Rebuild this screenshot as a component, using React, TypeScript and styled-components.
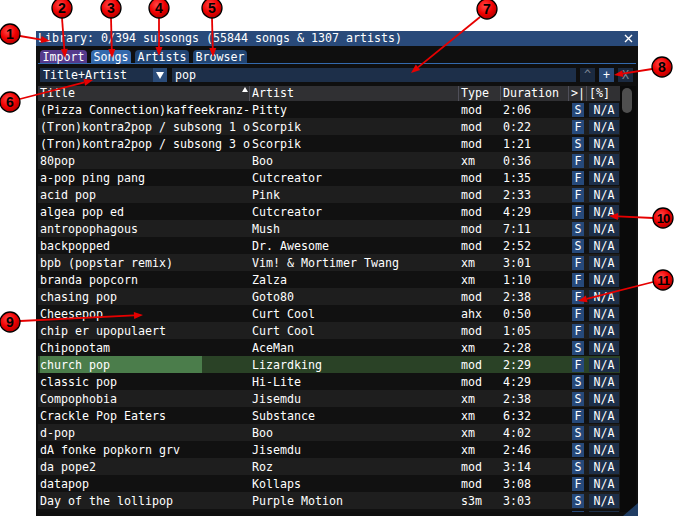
import React from "react";
import styled, { createGlobalStyle } from "styled-components";

const GlobalStyle = createGlobalStyle`
  html, body {
    margin: 0;
    padding: 0;
    background: #ffffff;
  }
  body {
    font-family: "DejaVu Sans Mono", "Liberation Mono", monospace;
  }
`;

type Song = {
  title: string;
  artist: string;
  type: string;
  time: string;
  src: "S" | "F";
};

// the title column only fits this many monospace cells
const TITLE_CHARS = 30;

const songs: Song[] = [
  { title: "(Pizza Connection)kaffeekranz-pop", artist: "Pitty", type: "mod", time: "2:06", src: "S" },
  { title: "(Tron)kontra2pop / subsong 1 of 3", artist: "Scorpik", type: "mod", time: "0:22", src: "F" },
  { title: "(Tron)kontra2pop / subsong 3 of 3", artist: "Scorpik", type: "mod", time: "1:21", src: "S" },
  { title: "80pop", artist: "Boo", type: "xm", time: "0:36", src: "F" },
  { title: "a-pop ping pang", artist: "Cutcreator", type: "mod", time: "1:35", src: "F" },
  { title: "acid pop", artist: "Pink", type: "mod", time: "2:33", src: "F" },
  { title: "algea pop ed", artist: "Cutcreator", type: "mod", time: "4:29", src: "F" },
  { title: "antropophagous", artist: "Mush", type: "mod", time: "7:11", src: "S" },
  { title: "backpopped", artist: "Dr. Awesome", type: "mod", time: "2:52", src: "S" },
  { title: "bpb (popstar remix)", artist: "Vim! & Mortimer Twang", type: "xm", time: "3:01", src: "F" },
  { title: "branda popcorn", artist: "Zalza", type: "xm", time: "1:10", src: "F" },
  { title: "chasing pop", artist: "Goto80", type: "mod", time: "2:38", src: "F" },
  { title: "Cheesepop", artist: "Curt Cool", type: "ahx", time: "0:50", src: "F" },
  { title: "chip er upopulaert", artist: "Curt Cool", type: "mod", time: "1:05", src: "F" },
  { title: "Chipopotam", artist: "AceMan", type: "xm", time: "2:28", src: "S" },
  { title: "church pop", artist: "Lizardking", type: "mod", time: "2:29", src: "F" },
  { title: "classic pop", artist: "Hi-Lite", type: "mod", time: "4:29", src: "S" },
  { title: "Compophobia", artist: "Jisemdu", type: "xm", time: "2:38", src: "S" },
  { title: "Crackle Pop Eaters", artist: "Substance", type: "xm", time: "6:32", src: "F" },
  { title: "d-pop", artist: "Boo", type: "xm", time: "4:02", src: "S" },
  { title: "dA fonke popkorn grv", artist: "Jisemdu", type: "xm", time: "2:46", src: "S" },
  { title: "da pope2", artist: "Roz", type: "mod", time: "3:14", src: "S" },
  { title: "datapop", artist: "Kollaps", type: "mod", time: "3:08", src: "F" },
  { title: "Day of the lollipop", artist: "Purple Motion", type: "s3m", time: "3:03", src: "S" },
  { title: "deep pop", artist: "Nuke", type: "xm", time: "2:11", src: "S" },
];

const PLAYING = 15;

const Page = styled.div`
  position: relative;
  width: 675px;
  height: 516px;
  overflow: hidden;
  padding: 31px 0 0 36px;
  box-sizing: border-box;
`;

const Window = styled.div`
  position: relative;
  width: 602px;
  height: 485px;
  background: #0f0f0f;
  color: #ffffff;
  font-size: 11.63px;
  display: flex;
  flex-direction: column;
  overflow: hidden;
`;

const TitleBar = styled.div`
  height: 15px;
  line-height: 15px;
  background: #294a7a;
  padding: 0 5px 0 2px;
  display: flex;
  align-items: center;
  justify-content: space-between;
  white-space: pre;
`;

const Body = styled.div`
  padding: 4px 2px 0;
  display: flex;
  flex-direction: column;
`;

const TabBar = styled.div`
  display: flex;
  gap: 4px;
  padding-left: 2px;
  height: 13px;
  border-bottom: 1px solid #3369ad;
`;

const tabColors = {
  import: "#553a8c",
  active: "#3369ad",
  idle: "#224573",
};

const Tab = styled.div<{ $tone: keyof typeof tabColors }>`
  height: 13px;
  line-height: 14px;
  padding: 0 2.5px;
  border-radius: 4px 4px 0 0;
  background: ${(p) => tabColors[p.$tone]};
`;

const FilterRow = styled.div`
  display: flex;
  gap: 4px;
  height: 14px;
  margin-top: 4px;
  padding: 0 3px 0 2px;
`;

const Combo = styled.div`
  width: 127px;
  margin-right: 1px;
  display: flex;
  background: #1d2f49;
`;

const ComboText = styled.div`
  flex: 1;
  padding-left: 3px;
  line-height: 14px;
`;

const ComboArrow = styled.div`
  width: 14px;
  background: #2b4c7a;
  display: flex;
  align-items: center;
  justify-content: center;
`;

const SearchInput = styled.div`
  flex: 1;
  background: #1d2f49;
  padding-left: 3px;
  line-height: 14px;
`;

const ToolButton = styled.div<{ $primary?: boolean }>`
  width: 15px;
  height: 14px;
  line-height: 14px;
  text-align: center;
  background: ${(p) => (p.$primary ? "#2b4c7a" : "#1b2a40")};
  color: ${(p) => (p.$primary ? "#ffffff" : "#7f8694")};
`;

const Table = styled.div`
  display: flex;
  margin-top: 4px;
  height: 426px;
`;

const TableMain = styled.div`
  width: 582px;
  display: flex;
  flex-direction: column;
`;

const columns = "212px 209px 42px 68px 18px 33px";

const HeaderRow = styled.div`
  display: grid;
  grid-template-columns: ${columns};
  height: 15px;
  line-height: 14px;
  background: #303033;
`;

const HeaderCell = styled.div<{ $last?: boolean }>`
  padding-left: 2px;
  display: flex;
  justify-content: space-between;
  align-items: flex-start;
  border-right: ${(p) => (p.$last ? "none" : "1px solid #4f4f59")};
  white-space: pre;
`;

const SortArrow = styled.svg`
  margin: 1px 1px 0 0;
`;

const RowList = styled.div`
  height: 411px;
  overflow: hidden;
`;

const Row = styled.div<{ $alt: boolean; $playing: boolean }>`
  display: grid;
  grid-template-columns: ${columns};
  height: 17px;
  line-height: 17px;
  background: ${(p) =>
    p.$playing
      ? "linear-gradient(90deg, #2a4226 0 2px, #4b7d4b 2px 164px, #2a4226 164px)"
      : p.$alt
      ? "#1e1e1e"
      : "#111111"};
`;

const Cell = styled.div`
  padding: 1px 0 0 2px;
  height: 16px;
  overflow: hidden;
  white-space: pre;
`;

const BadgeCell = styled.div<{ $inset: number }>`
  padding: 2px 0 0 ${(p) => p.$inset}px;
`;

const Badge = styled.div<{ $wide?: boolean }>`
  width: ${(p) => (p.$wide ? 30 : 12)}px;
  height: 14px;
  line-height: 15px;
  text-align: center;
  background: ${(p) => (p.$wide ? "#1d2f49" : "#26497a")};
`;

const ScrollTrack = styled.div`
  width: 16px;
  background: #0a0a0a;
  padding: 2px 4px 0 2px;
  box-sizing: border-box;
`;

const ScrollGrab = styled.div`
  height: 25px;
  border-radius: 5px;
  background: #4f4f4f;
`;

const ResizeGrip = styled.div`
  position: absolute;
  right: 0;
  bottom: 0;
  width: 15px;
  height: 13px;
  background: #203d63;
  clip-path: polygon(100% 0, 100% 100%, 0 100%);
`;

const Overlay = styled.svg`
  position: absolute;
  left: 0;
  top: 0;
  pointer-events: none;
`;

type Callout = { n: string; cx: number; cy: number; from: [number, number]; to: [number, number] };

const callouts: Callout[] = [
  { n: "1", cx: 10, cy: 34, from: [20, 36], to: [50, 41] },
  { n: "2", cx: 62, cy: 8, from: [62, 18], to: [65, 58] },
  { n: "3", cx: 111, cy: 8, from: [111, 18], to: [112, 58] },
  { n: "4", cx: 159, cy: 8, from: [159, 18], to: [159, 56] },
  { n: "5", cx: 212, cy: 8, from: [212, 18], to: [213, 57] },
  { n: "6", cx: 10, cy: 102, from: [20, 99], to: [93, 80] },
  { n: "7", cx: 487, cy: 9, from: [480, 17], to: [411, 73] },
  { n: "8", cx: 662, cy: 67, from: [652, 69], to: [614, 75] },
  { n: "9", cx: 10, cy: 322, from: [20, 321], to: [143, 315] },
  { n: "10", cx: 663, cy: 218, from: [653, 218], to: [609, 216] },
  { n: "11", cx: 663, cy: 280, from: [653, 282], to: [578, 301] },
];

function Arrow({ from, to }: { from: [number, number]; to: [number, number] }) {
  const [x1, y1] = from;
  const [x2, y2] = to;
  const a = Math.atan2(y2 - y1, x2 - x1);
  const len = 9;
  const half = 3.5;
  const bx = x2 - Math.cos(a) * len;
  const by = y2 - Math.sin(a) * len;
  const px = -Math.sin(a) * half;
  const py = Math.cos(a) * half;
  const head = `${x2},${y2} ${bx + px},${by + py} ${bx - px},${by - py}`;
  return (
    <g>
      <line x1={x1} y1={y1} x2={bx} y2={by} stroke="#e60000" strokeWidth={1.8} />
      <polygon points={head} fill="#e60000" />
    </g>
  );
}

function Callouts() {
  return (
    <Overlay width={675} height={516} viewBox="0 0 675 516">
      <defs>
        <radialGradient id="dot" cx="40%" cy="35%" r="65%">
          <stop offset="0%" stopColor="#ff4a4a" />
          <stop offset="60%" stopColor="#f00000" />
          <stop offset="100%" stopColor="#b80000" />
        </radialGradient>
      </defs>
      {callouts.map((c) => (
        <Arrow key={`a${c.n}`} from={c.from} to={c.to} />
      ))}
      {callouts.map((c) => (
        <g key={`c${c.n}`}>
          <circle cx={c.cx} cy={c.cy} r={10} fill="url(#dot)" stroke="#000" strokeWidth={1.3} />
          <text
            x={c.cx}
            y={c.cy + 5}
            textAnchor="middle"
            fontFamily="'Liberation Sans', Arial, sans-serif"
            fontWeight={700}
            fontSize={c.n.length > 1 ? 13 : 14}
            letterSpacing={c.n.length > 1 ? -1 : 0}
            fill="#000"
          >
            {c.n}
          </text>
        </g>
      ))}
    </Overlay>
  );
}

export default function App() {
  return (
    <>
      <GlobalStyle />
      <Page>
        <Window>
          <TitleBar>
            <span>Library: 0/394 subsongs (55844 songs &amp; 1307 artists)</span>
            <svg width="9" height="9" viewBox="0 0 9 9">
              <path d="M1 1L8 8M8 1L1 8" stroke="#fff" strokeWidth="1.4" />
            </svg>
          </TitleBar>
          <Body>
            <TabBar>
              <Tab $tone="import">Import</Tab>
              <Tab $tone="active">Songs</Tab>
              <Tab $tone="idle">Artists</Tab>
              <Tab $tone="idle">Browser</Tab>
            </TabBar>
            <FilterRow>
              <Combo>
                <ComboText>Title+Artist</ComboText>
                <ComboArrow>
                  <svg width="8" height="7" viewBox="0 0 8 7">
                    <path d="M0 0H8L4 7Z" fill="#fff" />
                  </svg>
                </ComboArrow>
              </Combo>
              <SearchInput>pop</SearchInput>
              <ToolButton>^</ToolButton>
              <ToolButton $primary>+</ToolButton>
              <ToolButton>X</ToolButton>
            </FilterRow>
            <Table>
              <TableMain>
                <HeaderRow>
                  <HeaderCell>
                    Title
                    <SortArrow width="6" height="5" viewBox="0 0 6 5">
                      <path d="M3 0L6 5H0Z" fill="#fff" />
                    </SortArrow>
                  </HeaderCell>
                  <HeaderCell>Artist</HeaderCell>
                  <HeaderCell>Type</HeaderCell>
                  <HeaderCell>Duration</HeaderCell>
                  <HeaderCell>&gt;|</HeaderCell>
                  <HeaderCell $last>[%]</HeaderCell>
                </HeaderRow>
                <RowList>
                  {songs.map((s, i) => (
                    <Row key={i} $alt={i % 2 === 1} $playing={i === PLAYING}>
                      <Cell>{s.title.slice(0, TITLE_CHARS)}</Cell>
                      <Cell>{s.artist}</Cell>
                      <Cell>{s.type}</Cell>
                      <Cell>{s.time}</Cell>
                      <BadgeCell $inset={3}>
                        <Badge>{s.src}</Badge>
                      </BadgeCell>
                      <BadgeCell $inset={2}>
                        <Badge $wide>N/A</Badge>
                      </BadgeCell>
                    </Row>
                  ))}
                </RowList>
              </TableMain>
              <ScrollTrack>
                <ScrollGrab />
              </ScrollTrack>
            </Table>
          </Body>
          <ResizeGrip />
        </Window>
        <Callouts />
      </Page>
    </>
  );
}
